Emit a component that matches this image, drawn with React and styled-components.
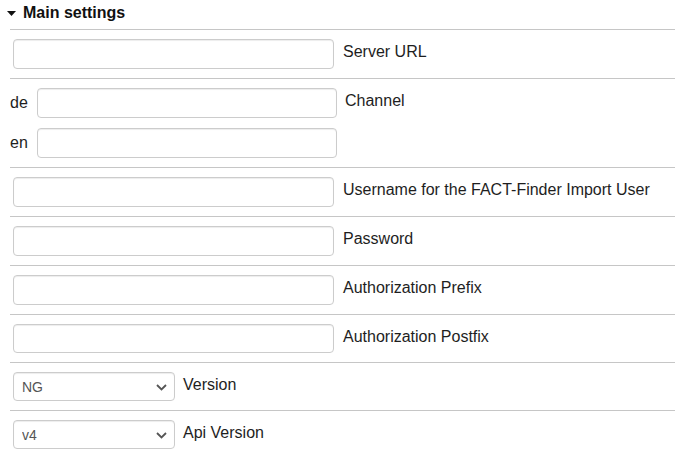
import React from 'react';
import styled, { createGlobalStyle } from 'styled-components';

const GlobalStyle = createGlobalStyle`
   html, body {
      margin: 0;
      padding: 0;
      background: #fff;
   }
   body {
      font-family: "Liberation Sans", Arial, sans-serif;
      color: #222;
   }
`;

const Page = styled.div`
   padding-left: 10px;
`;

const Header = styled.div`
   display: flex;
   align-items: center;
   gap: 7px;
   padding: 4px 0 7px;
   border-bottom: 1px solid #c6c6c6;
   font-size: 16px;
   font-weight: bold;
   line-height: 18px;
   color: #111;
`;

const Caret = styled.svg`
   margin-left: -3px;
   flex: none;
`;

const Row = styled.div`
   display: flex;
   align-items: flex-start;
   gap: ${({ gap }) => gap || 9}px;
   padding: ${({ flush }) => (flush ? '9px 0 9px 0' : '9px 0 9px 3px')};
   border-bottom: ${({ last }) => (last ? 'none' : '1px solid #c6c6c6')};
`;

const TextInput = styled.input`
   box-sizing: border-box;
   width: ${({ width }) => width || 321}px;
   height: ${({ short }) => (short ? 29.5 : 30)}px;
   margin: 0;
   padding: 4px 8px;
   border: 1px solid #ccc;
   border-radius: 4px;
   box-shadow: inset 0 1px 1px rgba(0, 0, 0, 0.075);
   font: 14px "Liberation Sans", Arial, sans-serif;
   color: #555;
   background: #fff;
   outline: none;
`;

const Label = styled.label`
   padding-top: 4px;
   font-size: 16px;
   line-height: 18px;
   color: #1e1e1e;
   white-space: nowrap;
`;

const LangList = styled.div`
   display: flex;
   flex-direction: column;
   gap: 10px;
`;

const LangRow = styled.div`
   display: flex;
   align-items: center;
`;

const LangCode = styled.span`
   width: 27px;
   font-size: 16px;
   color: #1e1e1e;
`;

const SelectWrap = styled.div`
   position: relative;
   width: 162px;
   height: 29px;
`;

const Select = styled.select`
   box-sizing: border-box;
   width: 100%;
   height: 100%;
   margin: 0;
   padding: 0 24px 0 8px;
   appearance: none;
   border: 1px solid #ccc;
   border-radius: 4px;
   box-shadow: inset 0 1px 1px rgba(0, 0, 0, 0.075);
   background: #fff;
   font: 14px "Liberation Sans", Arial, sans-serif;
   color: #555;
   outline: none;
`;

const Chevron = styled.svg`
   position: absolute;
   right: 8px;
   top: 12px;
   pointer-events: none;
`;

const fields = [
   'Username for the FACT-Finder Import User',
   'Password',
   'Authorization Prefix',
   'Authorization Postfix',
];

const Dropdown = ({ value, options }) => (
   <SelectWrap>
      <Select defaultValue={value}>
         {options.map((o) => (
            <option key={o}>{o}</option>
         ))}
      </Select>
      <Chevron width="11" height="7" viewBox="0 0 11 7">
         <path d="M1 1l4.5 4.5L10 1" fill="none" stroke="#555" strokeWidth="1.8" />
      </Chevron>
   </SelectWrap>
);

const App = () => {
   return (
      <Page>
         <GlobalStyle />
         <Header>
            <Caret width="9" height="5" viewBox="0 0 9 5">
               <path d="M0 0h9L4.5 5z" fill="#111" />
            </Caret>
            Main settings
         </Header>

         <Row>
            <TextInput type="text" />
            <Label>Server URL</Label>
         </Row>

         <Row flush gap={8}>
            <LangList>
               <LangRow>
                  <LangCode>de</LangCode>
                  <TextInput type="text" width={300} />
               </LangRow>
               <LangRow>
                  <LangCode>en</LangCode>
                  <TextInput type="text" width={300} />
               </LangRow>
            </LangList>
            <Label>Channel</Label>
         </Row>

         {fields.map((f, i) => (
            <Row key={f}>
               <TextInput type={f === 'Password' ? 'password' : 'text'} short={i > 1} />
               <Label>{f}</Label>
            </Row>
         ))}

         <Row gap={8}>
            <Dropdown value="NG" options={['NG', 'Standard']} />
            <Label>Version</Label>
         </Row>

         <Row gap={8} last>
            <Dropdown value="v4" options={['v4', 'v5']} />
            <Label>Api Version</Label>
         </Row>
      </Page>
   );
};

export default App;
